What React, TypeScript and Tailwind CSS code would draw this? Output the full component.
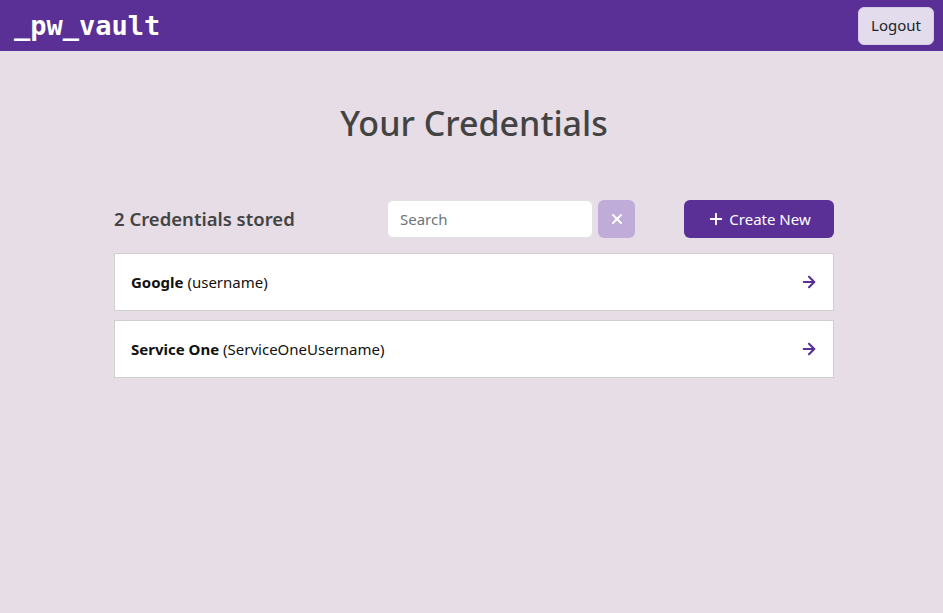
import { ArrowRight, Plus, X } from "lucide-react";

const credentials = [
  { id: 1, service: "Google", username: "username" },
  { id: 2, service: "Service One", username: "ServiceOneUsername" },
];

export default function App() {
  return (
    <div className="min-h-[613px] bg-[#e7dde6] font-['Noto_Sans',sans-serif] text-[#212529]">
      {/* Header */}
      <header className="flex h-[51px] items-center justify-between bg-[#5a2f96] pl-[14px] pr-[9px]">
        <div className="font-['DejaVu_Sans_Mono',monospace] text-[27px] font-bold leading-none text-white">
          _pw_vault
        </div>
        <button className="h-[38px] rounded-md border border-[#d6cce4] bg-[#e3dcec] px-3 text-[15px] text-[#212529]">
          Logout
        </button>
      </header>

      <main className="flex justify-center pl-[5px]">
        <div className="w-[720px]">
          <h1 className="mt-[50px] text-center text-[34px] font-medium leading-[44px] text-[#434343]">
            Your Credentials
          </h1>

          {/* Toolbar */}
          <div className="mt-[55px] flex h-[38px] items-center">
            <div className="w-[273px] text-[18.5px] font-semibold text-[#444]">
              2 Credentials stored
            </div>
            <div className="flex gap-[5px]">
              <input
                placeholder="Search"
                className="h-[38px] w-[206px] rounded-md border border-[#e2e2e2] bg-white px-3 text-[15px] placeholder:text-[#6c757d] outline-none"
              />
              <button className="flex h-[38px] w-[37px] items-center justify-center rounded-md bg-[#c0acd9] text-white">
                <X size={16} strokeWidth={3} />
              </button>
            </div>
            <button className="ml-auto flex h-[38px] w-[150px] items-center justify-center gap-1 rounded-md bg-[#5a2f96] text-[15px] text-white">
              <Plus size={18} strokeWidth={2.5} />
              Create New
            </button>
          </div>

          {/* List */}
          <div className="mt-[15px] flex flex-col gap-[9px]">
            {credentials.map((c) => (
              <div
                key={c.id}
                className="flex h-[58px] items-center justify-between border border-[#cfcfcf] bg-white pl-4 pr-[15px] text-[15px]"
              >
                <div className="text-[#111]">
                  <span className="font-bold">{c.service}</span> ({c.username})
                </div>
                <ArrowRight size={18} strokeWidth={2.75} className="text-[#5a2f96]" />
              </div>
            ))}
          </div>
        </div>
      </main>
    </div>
  );
}
